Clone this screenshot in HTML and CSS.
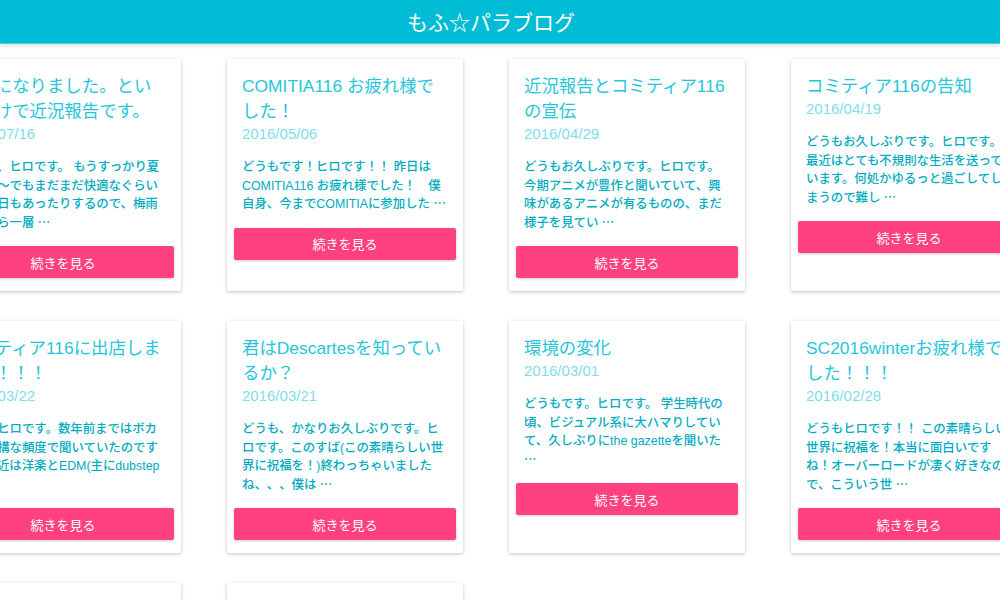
FILE: index.html
```html
<!DOCTYPE html>
<html lang="ja">
<head>
<meta charset="utf-8">
<title>もふ☆パラブログ</title>
<link rel="stylesheet" href="styles.css">
</head>
<body>
<header class="site-header">
  <h1 class="site-title">もふ☆パラブログ</h1>
</header>
<main class="viewport">
  <div class="post-grid">
    <article class="card">
      <div class="card-content">
        <h2 class="card-title">梅雨になりました。というわけで近況報告です。</h2>
        <div class="card-date">2016/07/16</div>
        <p class="card-text">どうも、ヒロです。 もうすっかり夏ですね〜でもまだまだ快適なぐらい涼しい日もあったりするので、梅雨明けから一層 <span class="ellipsis">…</span></p>
      </div>
      <div class="card-action"><a class="btn">続きを見る</a></div>
    </article>
    <article class="card">
      <div class="card-content">
        <h2 class="card-title">COMITIA116 お疲れ様でした！</h2>
        <div class="card-date">2016/05/06</div>
        <p class="card-text">どうもです！ヒロです！！ 昨日はCOMITIA116 お疲れ様でした！&#12288;僕自身、今までCOMITIAに参加した <span class="ellipsis">…</span></p>
      </div>
      <div class="card-action"><a class="btn">続きを見る</a></div>
    </article>
    <article class="card">
      <div class="card-content">
        <h2 class="card-title">近況報告とコミティア116の宣伝</h2>
        <div class="card-date">2016/04/29</div>
        <p class="card-text">どうもお久しぶりです。ヒロです。今期アニメが豊作と聞いていて、興味があるアニメが有るものの、まだ様子を見てい <span class="ellipsis">…</span></p>
      </div>
      <div class="card-action"><a class="btn">続きを見る</a></div>
    </article>
    <article class="card">
      <div class="card-content">
        <h2 class="card-title">コミティア116の告知</h2>
        <div class="card-date">2016/04/19</div>
        <p class="card-text">どうもお久しぶりです。ヒロです。最近はとても不規則な生活を送っています。何処かゆるっと過ごしてしまうので難し <span class="ellipsis">…</span></p>
      </div>
      <div class="card-action"><a class="btn">続きを見る</a></div>
    </article>
    <article class="card">
      <div class="card-content">
        <h2 class="card-title">コミティア116に出店します！！！！</h2>
        <div class="card-date">2016/03/22</div>
        <p class="card-text">どうもヒロです。数年前まではボカロを結構な頻度で聞いていたのですが、最近は洋楽とEDM(主にdubstep等) <span class="ellipsis">…</span></p>
      </div>
      <div class="card-action"><a class="btn">続きを見る</a></div>
    </article>
    <article class="card">
      <div class="card-content">
        <h2 class="card-title">君はDescartesを知っているか？</h2>
        <div class="card-date">2016/03/21</div>
        <p class="card-text">どうも、かなりお久しぶりです。ヒロです。このすば(この素晴らしい世界に祝福を！)終わっちゃいましたね、、、僕は <span class="ellipsis">…</span></p>
      </div>
      <div class="card-action"><a class="btn">続きを見る</a></div>
    </article>
    <article class="card">
      <div class="card-content">
        <h2 class="card-title">環境の変化</h2>
        <div class="card-date">2016/03/01</div>
        <p class="card-text">どうもです。ヒロです。 学生時代の頃、ビジュアル系に大ハマりしていて、久しぶりにthe gazetteを聞いた <span class="ellipsis">…</span></p>
      </div>
      <div class="card-action"><a class="btn">続きを見る</a></div>
    </article>
    <article class="card">
      <div class="card-content">
        <h2 class="card-title">SC2016winterお疲れ様でした！！！</h2>
        <div class="card-date">2016/02/28</div>
        <p class="card-text">どうもヒロです！！ この素晴らしい世界に祝福を！本当に面白いですね！オーバーロードが凄く好きなので、こういう世 <span class="ellipsis">…</span></p>
      </div>
      <div class="card-action"><a class="btn">続きを見る</a></div>
    </article>
    <article class="card">
      <div class="card-content">
        <h2 class="card-title">冬コミお疲れ様でした！</h2>
        <div class="card-date">2016/01/02</div>
        <p class="card-text">どうもヒロです。あけましておめでとうございます。今年もよろしくお願いします <span class="ellipsis">…</span></p>
      </div>
      <div class="card-action"><a class="btn">続きを見る</a></div>
    </article>
    <article class="card">
      <div class="card-content">
        <h2 class="card-title">ブログはじめました</h2>
        <div class="card-date">2015/12/20</div>
        <p class="card-text">はじめまして、ヒロです。これから色々と書いていこうと思います <span class="ellipsis">…</span></p>
      </div>
      <div class="card-action"><a class="btn">続きを見る</a></div>
    </article>
  </div>
</main>
</body>
</html>
```
FILE: styles.css
```css
html, body {
  margin: 0;
  padding: 0;
  background: #ffffff;
}

body {
  font-family: "Liberation Sans", "Noto Sans CJK JP", sans-serif;
  overflow-x: hidden;
  text-spacing-trim: space-all;
}

.site-header {
  background: #00bcd4;
  height: 43px;
  border-bottom: 1px solid #4dd0e1;
  box-shadow: 0 2px 4px rgba(0, 0, 0, 0.12);
  display: flex;
  align-items: center;
  justify-content: center;
  padding-right: 18px;
  position: relative;
  z-index: 1;
}

.site-title {
  margin: 0;
  color: #ffffff;
  font-family: "Noto Sans CJK JP", sans-serif;
  font-weight: 400;
  font-size: 21px;
  line-height: 1;
}

.viewport {
  padding-top: 15px;
}

.post-grid {
  display: grid;
  grid-template-columns: repeat(4, 236px);
  column-gap: 46px;
  row-gap: 30px;
  margin-left: -55px;
}

.card {
  background: #ffffff;
  border-radius: 2px;
  box-shadow: 0 1px 4px rgba(0, 0, 0, 0.18), 0 1px 2px rgba(0, 0, 0, 0.08);
  display: flex;
  flex-direction: column;
}

.card-content {
  padding: 15px 15px 0;
}

.card-title {
  margin: 0;
  font-weight: 400;
  font-size: 17.4px;
  line-height: 25px;
  color: #26c6da;
}

.card-date {
  font-size: 15px;
  line-height: 20px;
  color: #80deea;
}

.card-text {
  margin: 14px 1px 0 0;
  font-size: 12.4px;
  font-weight: 500;
  line-height: 18.5px;
  color: #00acc1;
}

.ellipsis {
  font-family: "Noto Sans CJK JP", sans-serif;
  line-height: 1;
}

.card-action {
  padding: 14px 7px 13px;
}

.btn {
  display: flex;
  align-items: center;
  justify-content: center;
  height: 32px;
  background: #ff4081;
  color: #ffffff;
  font-family: "Noto Sans CJK JP", sans-serif;
  font-size: 13px;
  border-radius: 2px;
  box-shadow: 0 1px 3px rgba(0, 0, 0, 0.2);
  cursor: pointer;
}
```
